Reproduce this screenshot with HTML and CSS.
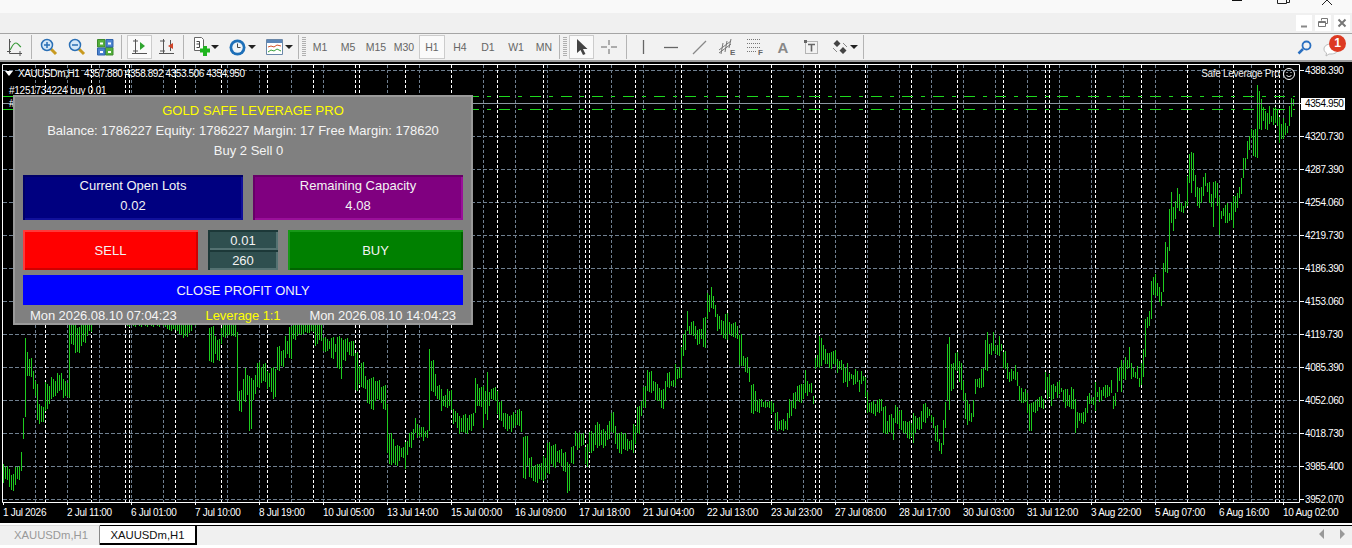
FILE: index.html
```html
<!DOCTYPE html>
<html lang="en">
<head>
<meta charset="utf-8">
<title>XAUUSDm,H1</title>
<link rel="stylesheet" href="styles.css">
</head>
<body>
<header class="topstrip">
  <svg class="winctl" width="120" height="13" viewBox="0 0 120 13"><path d="M0 .5h10" stroke="#111"/><path d="M45.500 0v3.500h9V0M55 2.500h2.500V0" fill="none" stroke="#222"/><path d="M90 5l5-5 5 5" fill="none" stroke="#222"/></svg>
</header>
<div class="mdirow">
  <span class="mdibtn"><svg width="16" height="16"><path d="M5 11.500h6" stroke="#888" stroke-width="2"/></svg></span>
  <span class="mdibtn"><svg width="16" height="16"><path d="M6.500 5.500v-2h6v5h-2M3.500 6.500h7v5h-7zM3.500 7.500h7" fill="none" stroke="#777"/></svg></span>
  <span class="mdibtn"><svg width="16" height="16"><path d="M4.500 4.500l7 7M11.500 4.500l-7 7" stroke="#777" stroke-width="2"/></svg></span>
</div>
<nav class="toolbar">
  <button class="tb w26 ml2"><svg width="18" height="18"><path d="M3.500 1v14.500H16" fill="none" stroke="#555"/><path d="M1 13.500h4M3 3l2 1M14 13v5" stroke="#555"/><path d="M4 12c2-3 3-7 6-7 2 0 3 3 5 4" fill="none" stroke="#3a9a3a" stroke-width="1.200"/></svg></button>
  <i class="sep sep1"></i>
  <button class="tb w28"><svg width="18" height="18"><path d="M11 11l5 5" stroke="#c89a20" stroke-width="3"/><circle cx="7" cy="7" r="5.500" fill="#d5e8f8" stroke="#2a6fb5" stroke-width="1.500"/><path d="M4 7h6M7 4v6" stroke="#2a6fb5" stroke-width="1.500"/></svg></button>
  <button class="tb w28"><svg width="18" height="18"><path d="M11 11l5 5" stroke="#c89a20" stroke-width="3"/><circle cx="7" cy="7" r="5.500" fill="#d5e8f8" stroke="#2a6fb5" stroke-width="1.500"/><path d="M4 7h6" stroke="#2a6fb5" stroke-width="1.500"/></svg></button>
  <button class="tb w28"><svg width="17" height="17"><path d="M.5.500h7.500v7.500H.5zM8.500 8.500h7.500v7.500H8.500z" fill="#55b03c" stroke="#3d8a2c"/><path d="M9 .500h7v7.500H9zM.5 9h7.500v7H.5z" fill="#4c84d0" stroke="#2f62aa"/><path d="M3 4.500h3M11 4.500h3M3 13h3M11 13h3" stroke="#fff" stroke-width="2"/></svg></button>
  <i class="sep sep2"></i>
  <button class="tb w25 on"><svg width="18" height="18"><path d="M4.500 1v15M1 15.500h15M2 3h5M2 13h5" stroke="#555" fill="none"/><path d="M9 4v8l5-4z" fill="#2fa52f"/></svg></button>
  <button class="tb w28 ml1"><svg width="18" height="18"><path d="M5.500 1v15M1 15.500h15M12.500 2v11M2 3h5M2 13h5" stroke="#555" fill="none"/><path d="M15 5v6l-5-3z" fill="#d0452a"/></svg></button>
  <i class="sep sep3"></i>
  <button class="tb w36"><svg width="19" height="20"><path d="M2.500.500h7l2 2v11h-9z" fill="#fff" stroke="#666"/><path d="M4.500 4.500h3v6h-3M4.500 7h3" fill="none" stroke="#444"/><path d="M8 13.500h10M13 9v10" stroke="#1fb51f" stroke-width="4"/></svg><b class="caret car0"></b></button>
  <button class="tb w37 pl5"><svg width="17" height="17"><circle cx="8.500" cy="8.500" r="8" fill="#1d6fb8"/><circle cx="8.500" cy="8.500" r="5.200" fill="#eef3f7"/><path d="M8.500 4.500v4h3" fill="none" stroke="#444"/></svg><b class="caret"></b></button>
  <button class="tb w37 pl5"><svg width="17" height="16"><path d="M.5.500h16v15H.5z" fill="#fff" stroke="#6a87a8"/><path d="M1 1h15v3H1z" fill="#5b86b8"/><path d="M2 8l3-1 3 1 3-2 4 1" fill="none" stroke="#d0502a"/><path d="M2 13l3-2 3 1 3-2 4 2" fill="none" stroke="#3aa03a"/></svg><b class="caret"></b></button>
  <i class="sep sep4"></i><i class="grip"></i>
  <button class="tb per">M1</button><button class="tb per">M5</button><button class="tb per">M15</button><button class="tb per">M30</button><button class="tb per sel">H1</button><button class="tb per">H4</button><button class="tb per">D1</button><button class="tb per">W1</button><button class="tb per">MN</button>
  <i class="sep sep5"></i><i class="grip"></i>
  <button class="tb w25 on ml2"><svg width="12" height="16"><path d="M1 0v14l3.500-3 2.500 5 2.500-1-2.500-5h4.500z" fill="#444"/></svg></button>
  <button class="tb w28 ml1"><svg width="16" height="16"><path d="M0 8h6M10 8h6M8 1v5M8 10v5" stroke="#666"/></svg></button>
  <i class="sep sep6"></i>
  <button class="tb w28 mlv"><svg width="3" height="14"><path d="M1.500 0v14" stroke="#666" stroke-width="1.300"/></svg></button>
  <button class="tb w28"><svg width="14" height="3"><path d="M0 1.500h14" stroke="#666" stroke-width="1.300"/></svg></button>
  <button class="tb w28"><svg width="15" height="15"><path d="M1 14L14 1" stroke="#888" stroke-width="1.200"/></svg></button>
  <button class="tb w28"><svg width="18" height="18"><path d="M1 12L13 3M1 15L13 6M3 16L5 5M7 14L9 3M11 10L13 1" stroke="#777" fill="none"/><text x="12" y="17" class="mini">E</text></svg></button>
  <button class="tb w28"><svg width="18" height="18"><path d="M1 1.500h13M1 5.500h13M1 9.500h13M1 13.500h9" stroke="#777" stroke-dasharray="1 1"/><text x="12" y="17" class="mini">F</text></svg></button>
  <button class="tb w28 glyph">A</button>
  <button class="tb w28"><svg width="15" height="15"><path d="M1.500 1.500h12v12h-12z" fill="none" stroke="#777" stroke-dasharray="1 1"/><path d="M0 0h3v3H0z" fill="#666"/><path d="M4 4.500h7M7.500 4.500v7" stroke="#666" stroke-width="1.600"/></svg></button>
  <button class="tb w37 pl7"><svg width="16" height="16"><path d="M5 1L1.500 4.500 5 8l3.500-3.500zM11 8L7.500 11.500 11 15l3.500-3.500z" fill="#444"/><path d="M1 9l4 4M11 4l4 4" stroke="#888"/></svg><b class="caret"></b></button>
  <i class="sep sep7"></i>
  <span class="tbright">
    <svg width="15" height="15"><path d="M1.500 13.500L6 9" stroke="#2a6fc0" stroke-width="2.500"/><circle cx="9.500" cy="5.500" r="4" fill="none" stroke="#2a6fc0" stroke-width="1.800"/></svg>
    <span class="bubble"><svg width="16" height="14"><path d="M1 6c0-3 3-5 7-5s7 2 7 5-3 5-7 5H6l-3 2 .5-3C2 9 1 8 1 6z" fill="#fff" stroke="#bbb"/></svg><b class="badge">1</b></span>
  </span>
</nav>
<main class="chart">
  <div class="plot"><svg id="plot" width="1300" height="441" viewBox="0 62 1300 441" aria-hidden="true"></svg></div>
  <div class="prices">
    <span>4388.390</span><span class="now">4354.950</span><span>4320.730</span><span>4287.390</span><span>4254.060</span><span>4219.730</span><span>4186.390</span><span>4153.060</span><span>4119.730</span><span>4085.390</span><span>4052.060</span><span>4018.730</span><span>3985.400</span><span>3952.070</span>
  </div>
  <div class="times">
    <span>1 Jul 2026</span><span>2 Jul 11:00</span><span>6 Jul 01:00</span><span>7 Jul 10:00</span><span>8 Jul 19:00</span><span>10 Jul 05:00</span><span>13 Jul 14:00</span><span>15 Jul 00:00</span><span>16 Jul 09:00</span><span>17 Jul 18:00</span><span>21 Jul 04:00</span><span>22 Jul 13:00</span><span>23 Jul 23:00</span><span>27 Jul 08:00</span><span>28 Jul 17:00</span><span>30 Jul 03:00</span><span>31 Jul 12:00</span><span>3 Aug 22:00</span><span>5 Aug 07:00</span><span>6 Aug 16:00</span><span>10 Aug 02:00</span>
  </div>
  <div class="symbol"><i class="tri"></i>XAUUSDm,H1&nbsp; 4357.880 4358.892 4353.506 4354.950</div>
  <div class="order1">#1251734224 buy 0.01</div>
  <div class="order2">#</div>
  <div class="ea">Safe Leverage Pro <svg width="12" height="12"><circle cx="6" cy="6" r="5.500" fill="none" stroke="#fff"/><path d="M3.500 7c1 2 4 2 5 0" fill="none" stroke="#fff"/><path d="M4 4v1M8 4v1" stroke="#fff"/></svg></div>
  <section class="panel">
    <div class="line title">GOLD SAFE LEVERAGE PRO</div>
    <div class="line">Balance: 1786227 Equity: 1786227 Margin: 17 Free Margin: 178620</div>
    <div class="line counts">Buy 2 Sell 0</div>
    <div class="stats">
      <div class="stat lots"><div>Current Open Lots</div><div>0.02</div></div>
      <div class="stat cap"><div>Remaining Capacity</div><div>4.08</div></div>
    </div>
    <div class="trade">
      <div class="btn sell">SELL</div>
      <div class="inputs"><div class="input">0.01</div><div class="input">260</div></div>
      <div class="btn buy">BUY</div>
    </div>
    <div class="btn close">CLOSE PROFIT ONLY</div>
    <div class="foot"><span>Mon 2026.08.10 07:04:23</span><span class="lev">Leverage 1:1</span><span>Mon 2026.08.10 14:04:23</span></div>
  </section>
</main>
<footer class="tabs">
  <span class="tab">XAUUSDm,H1</span><span class="tab active">XAUUSDm,H1</span>
  <span class="arrows"><svg width="26" height="10"><path d="M5 0v10L0 5zM21 0v10l5-5z" fill="#999"/></svg></span>
</footer>
<script src="chart.js"></script>
</body>
</html>
```
FILE: styles.css
```css
* { box-sizing: border-box; }
html, body { margin: 0; height: 548px; overflow: hidden; background: #fff; }
body { font-family: "Liberation Sans", Arial, sans-serif; }
.topstrip { height: 13px; background: #f9f9f9; display: flex; justify-content: flex-end; }
.mdirow { height: 21px; background: #f0f0f0; border-bottom: 1px solid #a5a5a5; display: flex; gap: 3px; justify-content: flex-end; padding: 2px 2px 0 0; }
.mdibtn { width: 16px; height: 16px; background: #fff; display: block; }
.mdibtn svg { display: block; }
.toolbar { height: 28px; background: #f2f2f2; border-bottom: 2px solid #9c9c9c; display: flex; align-items: center; }
.tb { border: 0; background: none; padding: 0; height: 24px; display: flex; align-items: center; justify-content: center; flex: none; font: 10.500px "Liberation Sans", sans-serif; color: #666; }
.w25 { width: 25px; } .w26 { width: 26px; } .w28 { width: 28px; } .w36 { width: 36px; justify-content: flex-start; padding-left: 4px; } .w37 { width: 37px; justify-content: flex-start; padding-left: 4px; }
.pl5 { padding-left: 5px; } .pl7 { padding-left: 7px; }
.ml1 { margin-left: 1px; } .ml2 { margin-left: 2px; }
.on { background: #fafafa; box-shadow: inset 0 0 0 1px #ccc; }
.per { width: 28px; }
.sel { background: #fafafa; box-shadow: inset 0 0 0 1px #ccc; width: 26px; margin: 0 1px; }
.sep { width: 1px; height: 24px; background: #b4b4b4; flex: none; }
.sep1 { margin: 0 3px; }
.sep2 { margin: 0 5px 0 2px; }
.sep3 { margin: 0 4px 0 2px; }
.sep4 { margin: 0 3px 0 0; }
.sep5 { margin: 0 3px 0 1px; }
.sep6 { margin: 0 0 0 3px; }
.mlv { margin-left: 2px; }
.sep7 { margin-left: 1px; }
.grip { width: 4px; height: 20px; flex: none; background: repeating-linear-gradient(#b0b0b0 0 1px, transparent 1px 2px); }
.caret { width: 0; height: 0; margin-left: 2px; border: 4px solid transparent; border-top-color: #222; border-bottom: 0; }
.car0 { margin-left: 0; }
.glyph { font-size: 15px; font-weight: bold; color: #888; }
.mini { font: bold 8px "Liberation Sans", sans-serif; fill: #666; }
.tbright { margin-left: auto; display: flex; align-items: center; gap: 11px; padding-right: 6px; }
.bubble { position: relative; display: block; width: 23px; height: 20px; padding-top: 6px; }
.badge { position: absolute; right: 0; top: -2px; width: 17px; height: 17px; border-radius: 50%; background: #dd3a22; color: #fff; font: bold 12px/17px "Liberation Sans", sans-serif; text-align: center; }
.chart { position: relative; height: 461px; background: #000; display: grid; grid-template-columns: 1300px 52px; grid-template-rows: 441px 20px; color: #fff; font-size: 10px; }
.plot { grid-column: 1; grid-row: 1; }
#plot { display: block; }
.prices { grid-column: 2; grid-row: 1 / 3; display: flex; flex-direction: column; gap: 17px; padding-left: 1px; }
.prices span { position: relative; display: block; height: 16px; line-height: 18px; width: 44px; padding-left: 4px; letter-spacing: -.4px; white-space: nowrap; }
.prices span::before { content: ""; position: absolute; left: -1px; top: 8px; width: 4px; height: 1px; background: #fff; }
.prices .now { color: #000; z-index: 0; }
.prices .now::after { content: ""; position: absolute; z-index: -1; inset: 3px 0 0; height: 12px; background: #fff; }
.times { grid-column: 1 / 3; grid-row: 2; display: flex; padding: 2px 0 0 3px; }
.times span { position: relative; flex: none; width: 64px; line-height: 16px; letter-spacing: -.3px; white-space: nowrap; }
.times span::before { content: ""; position: absolute; left: 0; top: -3px; width: 1px; height: 3px; background: #fff; }
.symbol { position: absolute; left: 5px; top: 5px; line-height: 13px; letter-spacing: -.42px; white-space: pre; }
.tri { display: inline-block; width: 0; height: 0; margin: 0 5px 1px 0; border: 4px solid transparent; border-top: 5px solid #fff; border-bottom: 0; }
.order1 { position: absolute; left: 9px; top: 22px; line-height: 13px; letter-spacing: -.25px; }
.order2 { position: absolute; left: 9px; top: 35px; line-height: 13px; }
.ea { position: absolute; right: 57px; top: 5px; line-height: 13px; display: flex; align-items: center; gap: 1px; letter-spacing: -.3px; white-space: pre; color: #eee; }
.panel { position: absolute; left: 13px; top: 33px; width: 460px; height: 230px; background: #808080; border: 2px solid #9a9a9a; padding: 3px 8px 0; font-size: 13px; color: #f4f4f4; }
.line { height: 20px; line-height: 22px; text-align: center; white-space: nowrap; }
.title { color: #ff0; padding-left: 20px; letter-spacing: .08px; }
.counts { padding-left: 11px; }
.stats { display: grid; grid-template-columns: 220px 210px; gap: 10px; margin-top: 15px; height: 45px; }
.stat { line-height: 20px; text-align: center; padding-top: 1px; }
.lots { background: #000080; box-shadow: inset 2px 2px 0 #000068, inset -2px -2px 0 #10109a; }
.cap { background: #800080; box-shadow: inset 2px 2px 0 #680068, inset -2px -2px 0 #9a109a; }
.trade { display: grid; grid-template-columns: 175px 70px 175px; gap: 10px; margin-top: 10px; height: 40px; }
.btn { display: flex; align-items: center; justify-content: center; }
.sell { background: #f00; box-shadow: inset 2px 2px 0 #ff3a3a, inset -2px -2px 0 #d00000; }
.buy { background: #008000; box-shadow: inset 2px 2px 0 #189818, inset -2px -2px 0 #006400; }
.close { background: #00f; height: 30px; margin-top: 5px; }
.inputs { display: flex; flex-direction: column; }
.input { height: 20px; line-height: 22px; text-align: center; background: #2f4f4f; box-shadow: inset 2px 2px 0 #1c3838, inset -2px -2px 0 #557272; }
.foot { display: flex; justify-content: space-between; height: 18px; line-height: 22px; padding: 0 7px; white-space: nowrap; letter-spacing: -.07px; }
.lev { color: #ff0; }
.tabs { height: 22px; background: #f0f0f0; display: flex; align-items: flex-end; position: relative; box-shadow: inset 0 2px 0 #fff, inset 0 3px 0 #000; }
.tab { width: 100px; height: 20px; padding: 2px 0 0 3px; font-size: 11.300px; line-height: 15px; text-align: center; color: #999; background: #f0f0f0; border-top: 1px solid #ddd; border-right: 1px solid #888; }
.tab.active { width: 97px; padding-left: 0; color: #111; background: #fff; border: 1px solid #000; border-width: 1px 2px 2px 0; }
.arrows { position: absolute; right: 7px; top: 6px; line-height: 0; }
```
FILE: chart.js
```js
var K=[[3,465,482],[6,466,480],[9,470,486],[12,474,491],[15,468,484],[18,466,480],[21,453,470],[23,417,440],[26,338,417],[28,353,375],[30,358,377],[33,372,388],[35,380,397],[37,384,420],[40,405,423],[43,407,422],[46,383,410],[49,386,404],[52,378,398],[55,381,396],[58,374,392],[61,373,390],[64,380,397],[67,383,397],[69,322,397],[72,322,345],[75,325,352],[78,327,353],[81,325,345],[84,323,343],[87,322,335],[90,318,332],[95,280,310],[157,300,326],[176,310,330],[180,310,335],[185,312,337],[190,315,332],[195,300,325],[205,290,320],[212,327,362],[215,335,355],[218,340,360],[221,327,345],[225,322,337],[230,320,335],[235,322,337],[238,333,400],[240,390,412],[243,380,400],[245,367,403],[248,375,395],[250,377,430],[253,380,400],[255,376,393],[258,362,388],[261,368,382],[265,363,382],[268,372,388],[271,368,392],[275,368,398],[278,347,370],[282,350,367],[285,337,357],[288,340,355],[290,327,358],[294,320,340],[298,320,335],[305,322,333],[312,322,332],[316,323,345],[320,325,340],[325,337,352],[329,340,350],[332,338,358],[335,343,353],[338,337,368],[341,337,380],[344,340,360],[347,337,353],[350,342,355],[353,340,357],[356,353,390],[359,365,385],[362,363,387],[365,375,390],[368,380,403],[372,377,410],[375,382,400],[378,380,400],[381,388,402],[385,385,410],[387,405,452],[390,433,465],[393,440,462],[396,445,466],[399,447,460],[402,447,458],[405,443,468],[408,440,456],[410,433,447],[413,428,441],[415,418,433],[418,425,437],[420,427,437],[423,428,440],[426,430,438],[429,350,430],[432,360,392],[435,375,395],[438,385,400],[441,390,410],[445,395,407],[449,390,407],[452,390,410],[454,410,423],[457,413,428],[460,417,433],[464,415,432],[467,417,435],[470,415,430],[473,412,427],[476,378,413],[478,385,405],[480,387,407],[483,387,427],[485,390,415],[487,372,420],[490,393,405],[492,388,400],[495,388,400],[498,390,415],[500,402,420],[503,412,428],[505,413,429],[508,415,430],[511,415,432],[514,413,427],[517,410,425],[520,410,425],[521,410,433],[522,433,462],[524,437,478],[527,435,467],[530,458,477],[535,465,482],[540,463,480],[545,457,480],[548,443,473],[551,445,465],[555,445,467],[558,450,463],[561,450,465],[565,452,472],[568,463,492],[572,447,463],[575,430,447],[578,433,450],[580,433,447],[583,433,445],[585,448,463],[588,443,468],[590,432,452],[592,432,452],[595,425,445],[598,423,447],[601,430,445],[604,430,447],[607,425,440],[610,422,438],[612,412,433],[615,427,443],[618,433,450],[620,433,453],[623,433,450],[625,433,450],[628,440,450],[631,440,450],[634,425,452],[636,425,445],[638,407,433],[641,400,417],[645,387,407],[647,369,392],[650,372,392],[653,380,392],[655,382,400],[658,385,400],[660,387,402],[662,390,408],[665,380,402],[668,373,387],[672,380,387],[675,365,385],[678,368,380],[680,367,378],[682,348,377],[684,333,357],[686,330,350],[688,312,330],[690,325,335],[692,322,335],[695,325,340],[697,330,345],[700,330,343],[702,328,340],[704,318,347],[707,292,320],[709,295,312],[711,288,307],[713,295,310],[715,305,317],[718,315,330],[721,320,335],[724,322,337],[726,313,340],[729,323,333],[732,323,337],[735,323,337],[738,325,340],[740,335,365],[743,355,367],[746,358,372],[749,367,383],[752,385,413],[755,390,412],[758,400,412],[761,398,408],[765,402,407],[768,401,408],[773,402,413],[777,413,430],[781,420,430],[785,420,430],[788,413,430],[790,400,417],[793,393,408],[795,393,408],[798,385,402],[800,385,402],[803,383,400],[805,370,393],[808,382,395],[810,383,393],[813,397,403],[816,357,370],[818,355,367],[820,337,367],[823,345,360],[825,350,363],[828,352,365],[830,353,368],[833,350,365],[835,350,365],[838,360,372],[840,360,370],[843,365,382],[845,367,383],[847,363,387],[850,373,380],[853,375,385],[856,370,383],[859,380,392],[861,372,383],[863,375,382],[865,377,397],[867,393,412],[870,402,413],[872,402,413],[875,403,417],[878,400,412],[880,400,412],[882,398,412],[884,407,433],[887,420,435],[890,415,432],[893,417,441],[896,405,423],[898,408,423],[900,410,430],[903,422,432],[906,420,435],[908,422,438],[911,422,438],[913,413,443],[916,417,432],[918,417,430],[921,412,428],[925,403,423],[928,408,417],[931,415,422],[934,418,427],[936,425,442],[939,440,450],[941,442,455],[944,420,445],[946,403,427],[948,343,402],[950,337,410],[952,365,390],[954,362,390],[956,353,370],[959,360,383],[962,363,390],[964,382,400],[966,392,420],[968,400,425],[970,405,420],[972,412,423],[974,400,417],[976,380,393],[978,378,388],[982,370,387],[984,367,388],[986,340,370],[988,333,370],[990,343,355],[993,333,350],[996,345,355],[999,337,355],[1002,343,352],[1004,352,368],[1007,362,380],[1009,372,382],[1013,370,380],[1015,365,380],[1017,373,385],[1019,385,402],[1021,388,403],[1023,393,402],[1025,388,403],[1027,393,413],[1029,405,430],[1031,402,432],[1033,402,412],[1035,402,412],[1037,398,412],[1039,397,407],[1041,397,407],[1043,398,410],[1045,372,390],[1047,378,398],[1049,373,398],[1051,385,406],[1053,385,398],[1055,385,393],[1057,382,398],[1059,382,393],[1061,387,393],[1063,390,402],[1065,390,407],[1067,388,407],[1069,395,407],[1071,388,408],[1073,388,410],[1075,399,433],[1077,413,427],[1079,412,422],[1081,413,423],[1083,413,423],[1085,407,423],[1087,396,413],[1089,394,403],[1091,397,405],[1093,397,405],[1095,383,410],[1097,391,398],[1099,387,402],[1101,391,400],[1103,386,397],[1105,385,398],[1107,386,396],[1109,386,397],[1111,380,393],[1113,397,408],[1115,392,407],[1117,368,392],[1119,368,380],[1121,359,393],[1123,363,379],[1125,358,379],[1127,359,370],[1129,347,368],[1131,364,378],[1133,367,378],[1135,372,378],[1137,367,378],[1139,377,388],[1141,363,385],[1143,350,376],[1145,318,358],[1147,317,328],[1149,312,325],[1151,280,320],[1153,277,295],[1155,275,295],[1157,282,297],[1159,287,302],[1161,293,305],[1163,262,293],[1165,242,272],[1167,248,272],[1169,208,252],[1171,192,223],[1173,208,230],[1175,200,220],[1177,188,208],[1179,195,210],[1181,202,213],[1183,206,213],[1185,202,207],[1187,175,207],[1189,154,183],[1191,153,192],[1193,152,182],[1195,175,197],[1197,188,205],[1199,187,209],[1201,187,203],[1203,178,195],[1205,172,187],[1207,183,192],[1209,183,202],[1211,193,208],[1213,182,227],[1215,182,197],[1217,182,207],[1219,197,235],[1221,212,218],[1223,207,217],[1225,205,223],[1227,204,222],[1229,212,222],[1231,202,220],[1233,197,227],[1235,195,213],[1237,193,208],[1239,188,197],[1241,177,195],[1243,158,178],[1245,159,168],[1247,140,160],[1249,136,150],[1251,130,137],[1255,129,157],[1257,86,157],[1259,90,130],[1261,99,130],[1263,108,120],[1265,110,130],[1267,113,130],[1269,107,123],[1271,115,123],[1273,108,125],[1275,108,122],[1277,108,127],[1279,117,143],[1281,125,138],[1283,117,140],[1285,123,135],[1287,127,132],[1289,105,127],[1291,98,117],[1293,100,105]];
var NS='http://www.w3.org/2000/svg',S=document.getElementById('plot');
function add(d,c,a,w){var p=document.createElementNS(NS,'path');p.setAttribute('d',d);p.setAttribute('stroke',c);p.setAttribute('fill','none');if(a)p.setAttribute('stroke-dasharray',a);if(w)p.setAttribute('stroke-width',w);S.appendChild(p);}
var h='',v='',w='',i;
for(i=0;i<14;i++)h+='M3 '+(70.5+33*i)+'H1299';
for(i=0;i<40;i++)v+='M'+(35.5+32*i)+' 65V502';
[45,91,125,129,175,221,267,313,355,359,405,451,497,543,585,589,635,681,727,771,815,819,865,911,957,1003,1045,1049,1095,1141,1187,1233,1275,1279].forEach(function(x){w+='M'+(x+.5)+' 65V502';});
add(h,'#708090','4 2');add(v,'#708090','3 2');add(w,'#fff','3 2');
add('M3 96.500H1295M3 109.500H1295','#1ed81e','11 8 4 8');
var b='',n=0;
for(var x=3;x<=1293;x+=2){while(n<K.length-1&&Math.abs(K[n+1][0]-x)<=Math.abs(K[n][0]-x))n++;var k=K[n],j=((x*7)%3)-1;var t=k[1]+j,e=k[2]-j;if(e<=t)e=t+2;b+='M'+(x+.5)+' '+t+'V'+e;}
add(b,'#1ecb1e');
add('M3 103.500H1299','#8b96a1');
add('M2.500 64.500H1299.500V502.500H2.500Z','#fff');
```
